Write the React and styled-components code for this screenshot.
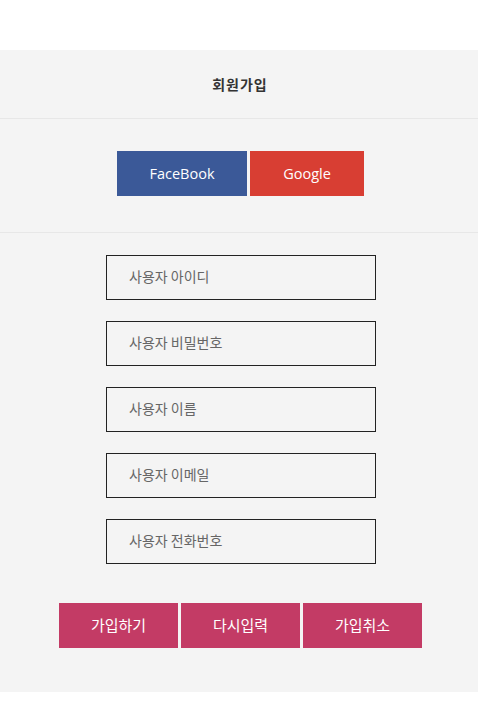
import React from "react";
import styled, { createGlobalStyle } from "styled-components";

const Global = createGlobalStyle`
  html, body { margin: 0; padding: 0; background: #fff; }
  body { font-family: "Noto Sans CJK KR", "Noto Sans", sans-serif; }
  * { box-sizing: border-box; }
`;

const Page = styled.div`
  padding-top: 50px;
`;

const Panel = styled.div`
  background: #f4f4f4;
  padding-bottom: 44px;
`;

const Header = styled.h2`
  margin: 0;
  height: 69px;
  display: flex;
  align-items: center;
  justify-content: center;
  padding-left: 2px;
  font-size: 14px;
  font-weight: 700;
  color: #333;
  letter-spacing: 1px;
  border-bottom: 1px solid #e7e7e7;
`;

const Social = styled.div`
  display: flex;
  justify-content: center;
  gap: 3px;
  padding: 32px 0 36px 3px;
  border-bottom: 1px solid #e7e7e7;
`;

const SocialButton = styled.button`
  width: ${(p) => p.$w}px;
  height: 45px;
  border: 0;
  margin: 0;
  background: ${(p) => p.$bg};
  color: #fff;
  font-family: "Open Sans", sans-serif;
  font-size: 14.5px;
  font-weight: 500;
  cursor: pointer;
`;

const Form = styled.div`
  display: flex;
  flex-direction: column;
  align-items: center;
  gap: 21px;
  padding: 22px 0 0 4px;
`;

const Field = styled.input`
  width: 270px;
  height: 45px;
  border: 1px solid #222;
  background: transparent;
  padding: 0 0 3px 22px;
  margin: 0;
  font-family: "Noto Sans CJK KR", sans-serif;
  font-size: 14px;
  color: #333;
  outline: none;
  &::placeholder { color: #666; }
`;

const Actions = styled.div`
  display: flex;
  justify-content: center;
  gap: 3px;
  padding: 39px 0 0 3px;
`;

const ActionButton = styled.button`
  width: 119px;
  height: 45px;
  border: 0;
  margin: 0;
  padding: 0 0 2px;
  background: #c33b65;
  color: #fff;
  font-family: "Noto Sans CJK KR", sans-serif;
  font-size: 15px;
  cursor: pointer;
`;

export default function App() {
  const fields = ["사용자 아이디", "사용자 비밀번호", "사용자 이름", "사용자 이메일", "사용자 전화번호"];
  return (
    <Page>
      <Global />
      <Panel>
        <Header>회원가입</Header>
        <Social>
          <SocialButton $w={130} $bg="#3b5998">FaceBook</SocialButton>
          <SocialButton $w={114} $bg="#d83e33">Google</SocialButton>
        </Social>
        <Form>
          {fields.map((f) => (
            <Field key={f} placeholder={f} type={f.includes("비밀") ? "password" : "text"} />
          ))}
        </Form>
        <Actions>
          <ActionButton>가입하기</ActionButton>
          <ActionButton>다시입력</ActionButton>
          <ActionButton>가입취소</ActionButton>
        </Actions>
      </Panel>
    </Page>
  );
}
